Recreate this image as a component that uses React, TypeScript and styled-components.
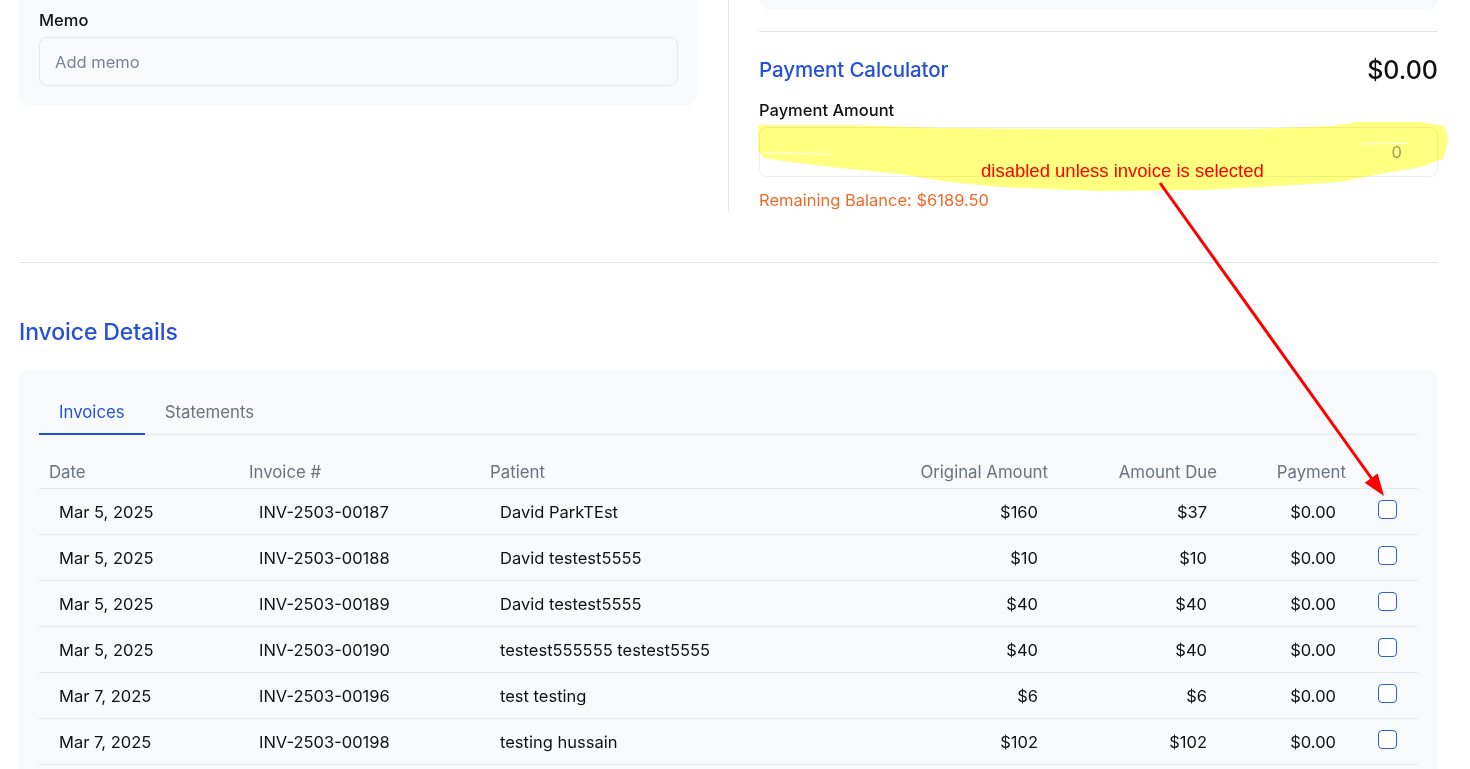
import React from "react";
import styled, { createGlobalStyle } from "styled-components";

const GlobalStyle = createGlobalStyle`
  html, body {
    margin: 0;
    padding: 0;
    overflow: hidden;
    background: #ffffff;
  }
  body {
    font-family: Inter, "Noto Sans", "Liberation Sans", sans-serif;
    color: #111827;
  }
  * { box-sizing: border-box; }
`;

const Page = styled.div`
  position: relative;
  display: flow-root;
  padding: 0 32px 40px 19px;
`;

const TopSection = styled.section`
  display: grid;
  grid-template-columns: 678px 2px 1fr;
  column-gap: 30px;
  margin-top: -24px;
`;

const MemoCard = styled.div`
  align-self: start;
  background: #f8f9fb;
  border-radius: 12px;
  padding: 33px 19px 20px 20px;
`;

const FieldLabel = styled.label`
  display: block;
  font-size: 16.5px;
  line-height: 22px;
  font-weight: 500;
  color: #111111;
  margin-bottom: 6px;
`;

const TextInput = styled.input<{ $align?: "left" | "right"; $bg?: string }>`
  display: block;
  width: 100%;
  height: ${(p) => (p.$align === "right" ? "50px" : "49px")};
  border: 1px solid ${(p) => (p.$align === "right" ? "#eef0f4" : "#e2e8f0")};
  border-radius: 8px;
  background: ${(p) => p.$bg || "#f8f9fb"};
  padding: ${(p) => (p.$align === "right" ? "0 35px 0 15px" : "0 15px")};
  text-align: ${(p) => p.$align || "left"};
  font-family: inherit;
  font-size: 16.5px;
  color: #9ca3af;
  outline: none;
  &::placeholder {
    color: #7b8494;
  }
`;

const VerticalDivider = styled.div`
  justify-self: end;
  width: 1px;
  background: #e5e7eb;
`;

const RightColumn = styled.div`
  display: flex;
  flex-direction: column;
`;

const SummaryCard = styled.div`
  height: 34px;
  background: #f8f9fb;
  border-radius: 12px;
`;

const Rule = styled.hr<{ $top: number }>`
  border: 0;
  height: 1px;
  background: #e2e6ef;
  margin: ${(p) => p.$top}px 0 0;
`;

const CalcHeader = styled.div`
  display: flex;
  justify-content: space-between;
  align-items: center;
  height: 32px;
  margin-top: 22px;
  margin-bottom: 13px;
`;

const BlueTitle = styled.h2<{ $size: number }>`
  margin: 0;
  font-size: ${(p) => p.$size}px;
  line-height: 30px;
  font-weight: 500;
  color: #2650d6;
  letter-spacing: -0.1px;
`;

const BigAmount = styled.div`
  font-size: 25px;
  font-weight: 500;
  color: #111111;
`;

const RemainingText = styled.div`
  margin-top: 12px;
  font-size: 16.5px;
  line-height: 22px;
  color: #ef6a2a;
`;

const InvoiceTitleWrap = styled.div`
  margin-top: 54px;
`;

const InvoiceCard = styled.div`
  margin-top: 22px;
  background: #f8f9fb;
  border-radius: 12px;
  padding: 20px;
`;

const TabList = styled.div`
  display: flex;
  border-bottom: 1px solid #e2e6ee;
`;

const Tab = styled.button<{ $active?: boolean }>`
  background: none;
  border: 0;
  border-bottom: 2px solid ${(p) => (p.$active ? "#1f4fd8" : "transparent")};
  margin-bottom: -1px;
  padding: 11px 20px 9px;
  font-family: inherit;
  font-size: 16.8px;
  line-height: 24px;
  color: ${(p) => (p.$active ? "#2650d6" : "#6b7280")};
  cursor: pointer;
`;

const COLS = "200px 241px 1fr 180px 169px 129px 62px";

const Table = styled.div`
  margin-top: 13px;
`;

const HeadRow = styled.div`
  display: grid;
  grid-template-columns: ${COLS};
  border-bottom: 1px solid #e2e6ee;
`;

const HeadCell = styled.div<{ $right?: boolean }>`
  padding: 12px 10px 4px;
  font-size: 16.8px;
  line-height: 24px;
  color: #6b7280;
  text-align: ${(p) => (p.$right ? "right" : "left")};
  white-space: nowrap;
`;

const BodyRow = styled.div`
  display: grid;
  grid-template-columns: ${COLS};
  border-bottom: 1px solid #e2e6ee;
`;

const Cell = styled.div<{ $right?: boolean }>`
  padding: 11px 20px 10px;
  font-size: 16.5px;
  line-height: 24px;
  color: #111111;
  text-align: ${(p) => (p.$right ? "right" : "left")};
  white-space: nowrap;
`;

const CheckCell = styled.div`
  display: flex;
  justify-content: center;
  align-items: center;
  padding-bottom: 5px;
`;

const CheckBox = styled.span`
  display: block;
  width: 19px;
  height: 19px;
  border: 1.5px solid #2f5fe0;
  border-radius: 4px;
  background: #ffffff;
`;

const AnnotationLayer = styled.svg`
  position: absolute;
  top: 0;
  left: 0;
  width: 1470px;
  height: 769px;
  pointer-events: none;
`;

const HighlightLayer = styled(AnnotationLayer)`
  mix-blend-mode: multiply;
`;

const AnnotationText = styled.div`
  position: absolute;
  left: 981px;
  top: 159px;
  font-family: "Liberation Sans", "DejaVu Sans", sans-serif;
  font-size: 18.5px;
  line-height: 24px;
  color: #ff0000;
  pointer-events: none;
  white-space: nowrap;
`;

const rows = [
  ["Mar 5, 2025", "INV-2503-00187", "David ParkTEst", "$160", "$37", "$0.00"],
  ["Mar 5, 2025", "INV-2503-00188", "David testest5555", "$10", "$10", "$0.00"],
  ["Mar 5, 2025", "INV-2503-00189", "David testest5555", "$40", "$40", "$0.00"],
  ["Mar 5, 2025", "INV-2503-00190", "testest555555 testest5555", "$40", "$40", "$0.00"],
  ["Mar 7, 2025", "INV-2503-00196", "test testing", "$6", "$6", "$0.00"],
  ["Mar 7, 2025", "INV-2503-00198", "testing hussain", "$102", "$102", "$0.00"],
];

const highlight =
  "M760,127 L850,127 L950,130 L1050,131 L1150,131 L1250,131 L1330,128 L1360,124 L1420,124 L1443,128 L1446,140 L1442,157 L1420,165 L1380,172 L1340,180 L1280,184 L1200,188 L1100,189 L1000,185 L950,180 L900,172 L840,166 L790,160 L765,156 L760,150 Z";

export default function App() {
  return (
    <>
      <GlobalStyle />
      <Page>
        <TopSection>
          <MemoCard>
            <FieldLabel>Memo</FieldLabel>
            <TextInput placeholder="Add memo" />
          </MemoCard>
          <VerticalDivider />
          <RightColumn>
            <SummaryCard />
            <Rule $top={21} />
            <CalcHeader>
              <BlueTitle $size={20.5}>Payment Calculator</BlueTitle>
              <BigAmount>$0.00</BigAmount>
            </CalcHeader>
            <FieldLabel>Payment Amount</FieldLabel>
            <TextInput $align="right" $bg="#ffffff" defaultValue="0" disabled />
            <RemainingText>Remaining Balance: $6189.50</RemainingText>
          </RightColumn>
        </TopSection>

        <Rule $top={51} />

        <InvoiceTitleWrap>
          <BlueTitle $size={23}>Invoice Details</BlueTitle>
        </InvoiceTitleWrap>

        <InvoiceCard>
          <TabList>
            <Tab $active>Invoices</Tab>
            <Tab>Statements</Tab>
          </TabList>
          <Table>
            <HeadRow>
              <HeadCell>Date</HeadCell>
              <HeadCell>Invoice #</HeadCell>
              <HeadCell>Patient</HeadCell>
              <HeadCell $right>Original Amount</HeadCell>
              <HeadCell $right>Amount Due</HeadCell>
              <HeadCell $right>Payment</HeadCell>
              <HeadCell />
            </HeadRow>
            {rows.map((r) => (
              <BodyRow key={r[1]}>
                <Cell>{r[0]}</Cell>
                <Cell>{r[1]}</Cell>
                <Cell>{r[2]}</Cell>
                <Cell $right>{r[3]}</Cell>
                <Cell $right>{r[4]}</Cell>
                <Cell $right>{r[5]}</Cell>
                <CheckCell>
                  <CheckBox />
                </CheckCell>
              </BodyRow>
            ))}
          </Table>
        </InvoiceCard>

        <HighlightLayer viewBox="0 0 1470 769">
          <path d={highlight} fill="#ffff80" stroke="#ffff80" strokeWidth="4" strokeLinejoin="round" />
          <path d="M762,153 L830,154" stroke="#ffffff" strokeWidth="1.5" opacity="0.7" />
          <path d="M1362,144 L1408,143" stroke="#ffffff" strokeWidth="1.5" opacity="0.7" />
        </HighlightLayer>
        <AnnotationText>disabled unless invoice is selected</AnnotationText>
        <AnnotationLayer viewBox="0 0 1470 769">
          <line x1="1160" y1="183" x2="1372" y2="479" stroke="#ff0000" strokeWidth="3" />
          <polygon points="1384,496 1364.7,482.8 1377.7,473.4" fill="#ff0000" />
        </AnnotationLayer>
      </Page>
    </>
  );
}
